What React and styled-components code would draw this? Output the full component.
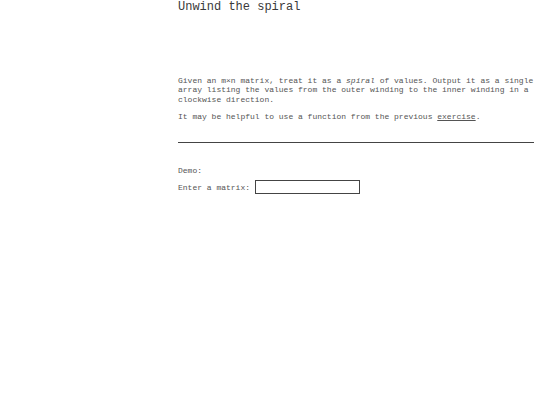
import React from 'react'
import styled, { createGlobalStyle } from 'styled-components'

const GlobalStyle = createGlobalStyle`
	html, body {
		margin: 0;
		padding: 0;
		background: #fff;
	}
	body {
		font-family: "Liberation Mono", "Courier New", monospace;
		color: #555;
	}
`

const Page = styled.div`
	display: flex;
	padding-left: 178px;
`

const Content = styled.main`
	width: 356px;
`

const Title = styled.h1`
	font-size: 12px;
	font-weight: normal;
	line-height: 14px;
	margin: 0 0 62px;
	color: #3a3a3a;
`

const Text = styled.p`
	font-size: 8px;
	line-height: 9.3px;
	margin: 0 0 ${(p) => p.gap ?? 8}px;
`

const Link = styled.a`
	color: inherit;
	text-decoration: underline;
`

const Rule = styled.hr`
	border: 0;
	border-top: 1px solid #444;
	margin: 21px 0 23px;
`

const Row = styled.div`
	display: flex;
	align-items: center;
	gap: 5px;
	font-size: 8px;
`

const MatrixInput = styled.input`
	width: 105px;
	height: 14px;
	box-sizing: border-box;
	border: 1px solid #444;
	padding: 0 2px;
	font-family: inherit;
	font-size: 8px;
	outline: none;
`

export default function App() {
	return (
		<>
			<GlobalStyle />
			<Page>
				<Content>
					<Title>Unwind the spiral</Title>
					<Text>
						Given an m×n matrix, treat it as a <em>spiral</em> of values. Output it as a single
						array listing the values from the outer winding to the inner winding in a
						clockwise direction.
					</Text>
					<Text gap={0}>
						It may be helpful to use a function from the previous <Link href="#">exercise</Link>.
					</Text>
					<Rule />
					<Text gap={5}>Demo:</Text>
					<Row>
						<span>Enter a matrix:</span>
						<MatrixInput type="text" />
					</Row>
				</Content>
			</Page>
		</>
	)
}
